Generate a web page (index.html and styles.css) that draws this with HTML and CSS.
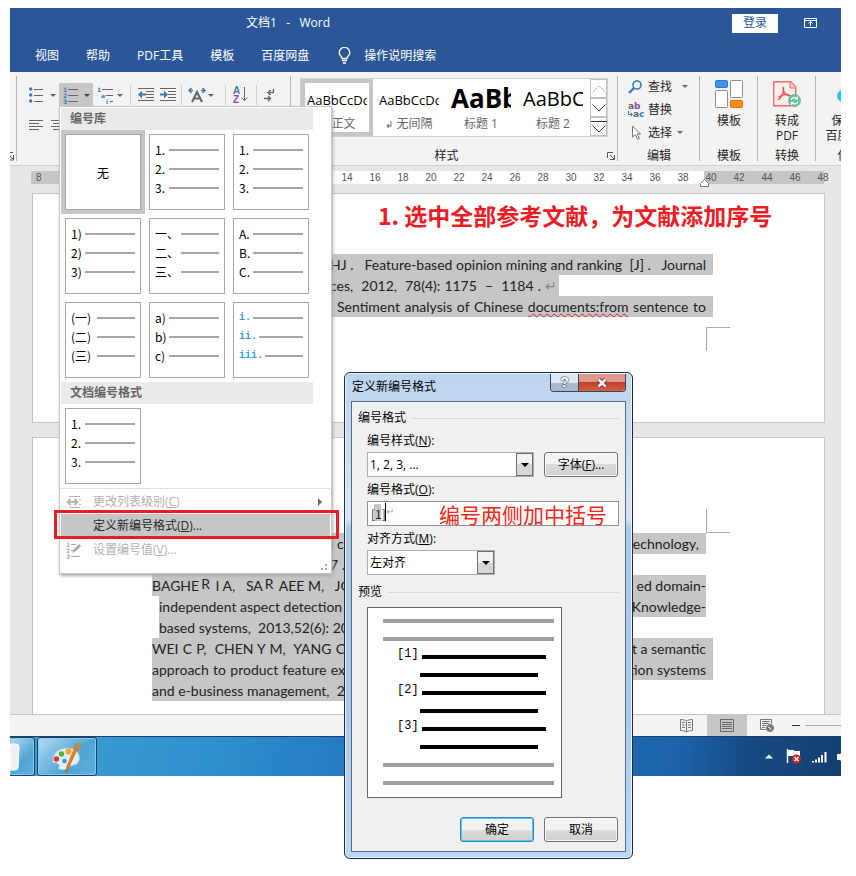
FILE: index.html
```html
<!DOCTYPE html>
<html lang="zh-CN">
<head>
<meta charset="utf-8">
<title>文档1 - Word</title>
<link rel="stylesheet" href="styles.css">
</head>
<body>
<main class="window">
  <header class="titlebar">
    <div class="title-row">
      <h1 class="doc-title">文档1 &nbsp;&nbsp;-&nbsp;&nbsp; Word</h1>
      <button class="login">登录</button>
      <button class="ribbon-toggle" aria-label="功能区显示选项">
        <svg width="13" height="10" viewBox="0 0 13 10" fill="none" stroke="#fff"><path d="M.5.5h12v9H.5zM.5 2.5h12M6.5 8V4M4.500 5.500l2-2 2 2"/></svg>
      </button>
    </div>
    <nav class="tabs">
      <a href="#view">视图</a><a href="#help">帮助</a><a href="#pdf">PDF工具</a><a href="#tpl">模板</a><a href="#pan">百度网盘</a>
      <a href="#tell" class="tell"><svg width="13" height="18" viewBox="0 0 13 18" fill="none" stroke="#fff" stroke-width="1.300"><path d="M4 11.500C4 9 1.200 8.500 1.200 5.700a5.300 5.300 0 0 1 10.600 0C11.800 8.500 9 9 9 11.500zM4 13.500h5M5 16h3"/></svg>操作说明搜索</a>
    </nav>
  </header>

  <section class="ribbon">
    <div class="group group-edge"><svg width="4" height="9" viewBox="0 0 4 9" fill="none" stroke="#555"><path d="M0 .5h3M0 4l3 3M3.500 3v5H0"/></svg></div>
    <div class="group group-para">
      <div class="tools">
        <button class="tool" aria-label="项目符号"><svg width="28" height="18" viewBox="0 0 28 18"><g fill="#3f7ab5"><circle cx="1.700" cy="3" r="1.700"/><circle cx="1.700" cy="9" r="1.700"/><circle cx="1.700" cy="15" r="1.700"/></g><path d="M5 3.500h9M5 9.500h9M5 15.500h9" stroke="#666"/><path d="M21 8h6l-3 3z" fill="#666"/></svg></button>
        <button class="tool on" aria-label="编号"><svg width="28" height="18" viewBox="0 0 28 18"><g class="digit" fill="#3f7ab5"><text x="0" y="6">1</text><text x="0" y="12">2</text><text x="0" y="18">3</text></g><path d="M5 3.500h10M5 9.500h10M5 15.500h10" stroke="#666"/><path d="M21 8h6l-3 3z" fill="#444"/></svg></button>
        <button class="tool" aria-label="多级列表"><svg width="28" height="18" viewBox="0 0 28 18"><g class="digit" fill="#3f7ab5"><text x="0" y="6">1</text><text x="4" y="12">a</text><text x="9" y="18">i</text></g><path d="M5 3.500h11M9 9.500h7M13 15.500h3" stroke="#666"/><path d="M20 8h6l-3 3z" fill="#666"/></svg></button>
        <span class="sep"></span>
        <button class="tool slim" aria-label="减少缩进量"><svg width="17" height="14" viewBox="0 0 17 14"><path d="M0 .5h16M8 3.500h8M8 6.500h8M8 9.500h8M0 12.500h16" stroke="#666"/><path d="M0 6.500l4-4v3h4v2H4v3z" fill="#3f7ab5"/></svg></button>
        <button class="tool slim" aria-label="增加缩进量"><svg width="17" height="14" viewBox="0 0 17 14"><path d="M0 .5h16M8 3.500h8M8 6.500h8M8 9.500h8M0 12.500h16" stroke="#666"/><path d="M8 6.500l-4-4v3H0v2h4v3z" fill="#3f7ab5"/></svg></button>
        <span class="sep"></span>
        <button class="tool wide" aria-label="中文版式"><svg width="26" height="16" viewBox="0 0 26 16" fill="none"><path d="M4 15l5-10 5 10M6 11.500h6" stroke="#666" stroke-width="2"/><path d="M3.500 1L1 3.500 3.500 6M1 3.500h4M14.500 1L17 3.500 14.500 6M17 3.500h-4" stroke="#3f7ab5" stroke-width="1.500"/><path d="M20 7h6l-3 3z" fill="#666"/></svg></button>
        <span class="sep"></span>
        <button class="tool sort" aria-label="排序"><svg width="15" height="18" viewBox="0 0 15 18"><g class="letters"><text x="0" y="8" fill="#3f7ab5">A</text><text x="0" y="17" fill="#8a4aa8">Z</text></g><path d="M11.500 1v13M8.500 11.500l3 3 3-3" fill="none" stroke="#666"/></svg></button>
        <span class="sep"></span>
        <button class="tool sort" aria-label="显示编辑标记"><svg width="12" height="14" viewBox="0 0 12 14" fill="none" stroke="#666" stroke-width="1.300"><path d="M9.500 1v3.500H4M6.500 2L4 4.500 6.500 7M0 10.500h6M4 8l2.500 2.500L4 13"/></svg></button>
      </div>
      <div class="tools second">
        <button class="tool slim" aria-label="左对齐"><svg width="14" height="12" viewBox="0 0 14 12"><path d="M0 .5h14M0 3.500h10M0 6.500h14M0 9.500h10" stroke="#666"/></svg></button>
        <button class="tool slim" aria-label="居中"><svg width="14" height="12" viewBox="0 0 14 12"><path d="M0 .5h14M2 3.500h10M0 6.500h14M2 9.500h10" stroke="#666"/></svg></button>
      </div>
    </div>
    <div class="group group-styles">
      <div class="gallery">
        <button class="style on"><span class="sample">AaBbCcDdEe</span><span class="name">↲ 正文</span></button>
        <button class="style"><span class="sample">AaBbCcDdEe</span><span class="name"><small>↲</small> 无间隔</span></button>
        <button class="style"><span class="sample h1">AaBbC</span><span class="name">标题 1</span></button>
        <button class="style"><span class="sample h2">AaBbCc</span><span class="name">标题 2</span></button>
        <div class="scroll">
          <button aria-label="上一行"><svg width="14" height="8" viewBox="0 0 14 8" fill="none" stroke="#bbb"><path d="M.5 7.500L7 1l6.500 6.500"/></svg></button>
          <button aria-label="下一行"><svg width="14" height="8" viewBox="0 0 14 8" fill="none" stroke="#333"><path d="M.5.5L7 7 13.500.5"/></svg></button>
          <button aria-label="其他"><svg width="16" height="14" viewBox="0 0 16 14" fill="none" stroke="#333"><path d="M0 1.500h16M1.500 5.500L8 12l6.500-6.500"/></svg></button>
        </div>
      </div>
      <div class="caption">样式</div>
      <svg class="launcher" width="8" height="8" viewBox="0 0 8 8" fill="none" stroke="#555"><path d="M.5 6V.5H6M3 3l4 4M7.500 3v4.500H3"/></svg>
    </div>
    <div class="group group-edit">
      <button class="cmd"><svg width="16" height="14" viewBox="0 0 16 14" fill="none" stroke="#3f7ab5"><circle cx="9" cy="5" r="4" stroke-width="1.600"/><path d="M6 8l-5 5" stroke-width="2.400"/></svg>查找<i class="caret far"></i></button>
      <button class="cmd"><svg width="16" height="16" viewBox="0 0 16 16"><g class="abc"><text x="0" y="7" fill="#666">a<tspan fill="#8a4aa8">b</tspan></text><text x="5" y="15" fill="#666">a<tspan fill="#3f7ab5">c</tspan></text></g><path d="M.5 9v3.500H4M2.500 10.500l2 2-2 2" fill="none" stroke="#3f7ab5"/></svg>替换</button>
      <button class="cmd"><svg width="16" height="16" viewBox="0 0 16 16" fill="#fff" stroke="#777"><path d="M4.500 1v11l2.800-2.500L9.500 14.500l2-1-2.300-4.500h3.300z"/></svg>选择<i class="caret"></i></button>
      <div class="caption">编辑</div>
    </div>
    <div class="group group-tpl">
      <button class="big"><svg width="28" height="28" viewBox="0 0 28 28"><rect x=".5" y=".5" width="12" height="7" rx="1" fill="#4394e5" stroke="#2a78c8"/><rect x="15.500" y=".5" width="12" height="17" rx="1" fill="#fff" stroke="#8d8d8d"/><rect x=".5" y="10.500" width="12" height="17" rx="1" fill="#fff" stroke="#8d8d8d"/><rect x="15.500" y="20.500" width="12" height="7" rx="1" fill="#ff8d1c" stroke="#e07808"/></svg><span>模板</span></button>
      <div class="caption">模板</div>
    </div>
    <div class="group group-pdf">
      <button class="big"><svg width="28" height="28" viewBox="0 0 28 28"><path d="M.7 1.700h17l5 5v19h-22z" fill="#fdeeee" stroke="#f06a6a" stroke-width="1.400"/><path d="M17 2v6h6" fill="#fbd0d0" stroke="#f06a6a"/><path d="M10 7c2 4-1 10-5 13M10 8c0 4 3 8 8 8M5.500 17c3-2 7-3 11-2" fill="none" stroke="#ef4f55" stroke-width="1.400"/><circle cx="21.500" cy="20.500" r="6.500" fill="#65c29a"/><path d="M18 20c1-3 5-3 6.500-1m0-2.500V19H22M25 21.500c-1 3-5 3-6.500 1m0 2.500v-2.500H21" fill="none" stroke="#fff" stroke-width="1.200"/></svg><span>转成<br>PDF</span></button>
      <div class="caption">转换</div>
    </div>
    <div class="group group-save">
      <button class="big"><svg width="28" height="28" viewBox="0 0 28 28"><circle cx="7" cy="16" r="6" fill="#25c4f3"/><circle cx="21" cy="16" r="6" fill="#2a7df0"/></svg><span>保存到<br>百度网盘</span></button>
      <div class="caption">保存</div>
    </div>
  </section>

  <section class="workspace">
    <div class="ruler">
      <span class="first">8</span><span>14</span><span>16</span><span>18</span><span>20</span><span>22</span><span>24</span><span>26</span><span>28</span><span>30</span><span>32</span><span>34</span><span>36</span><span>38</span><span>40</span><span>42</span><span>44</span><span>46</span><span>48</span>
      <svg class="indent" width="9" height="8" viewBox="0 0 9 8" fill="#fff" stroke="#777"><path d="M.5 7.500v-3l4-4 4 4v3z"/></svg>
    </div>
    <article class="page page-one">
      <p class="note">1. 选中全部参考文献，为文献添加序号</p>
      <div class="refs">
        <p class="line"><span class="tail">HJ .&nbsp;&nbsp; Feature-based opinion mining and ranking&nbsp; [J] .&nbsp;&nbsp; Journal</span></p>
        <p class="line part-a"><span class="tail">ces,&nbsp; 2012,&nbsp; 78(4): 1175&nbsp; –&nbsp; 1184 . <em>↵</em></span></p>
        <p class="line"><span class="tail later">Sentiment analysis of Chinese <u class="typo">documents:from</u> sentence to</span></p>
      </div>
      <i class="corner bottom"></i>
    </article>
    <article class="page page-two">
      <i class="corner top"></i>
      <div class="refs">
        <p class="line short"><span class="mid">l c</span><span>echnology,&nbsp;&nbsp;</span></p>
        <p class="line part-b"><span class="mid">7 .</span></p>
        <p class="line short"><span class="head">BAGHE<sup>R</sup> I A,&nbsp;&nbsp; SA<sup>R</sup> AEE M,&nbsp;&nbsp; JON</span><span>ed domain-</span></p>
        <p class="line short inset"><span class="head">independent aspect detection f</span><span>Knowledge-</span></p>
        <p class="line part-b inset"><span class="head">based systems,&nbsp; 2013,52(6): 20</span></p>
        <p class="line"><span class="head">WEI C P,&nbsp; CHEN Y M,&nbsp; YANG C</span><span>t a semantic</span></p>
        <p class="line"><span class="head">approach to product feature ex</span><span>tion systems</span></p>
        <p class="line part-b"><span class="head">and e-business management,&nbsp; 2</span></p>
      </div>
    </article>
  </section>

  <footer class="status">
    <button aria-label="阅读视图"><svg width="14" height="14" viewBox="0 0 14 14" fill="none" stroke="#777"><path d="M6.500 2C5 1 3 .5.500.5v11c2.500 0 4.500.5 6 1.500 1.500-1 3.500-1.500 6-1.500V.5c-2.500 0-4.500.5-6 1.500zM6.500 2v11M2 3.500h3M2 6h3M2 8.500h3M8 3.500h3M8 6h3M8 8.500h3"/></svg></button>
    <button class="on" aria-label="页面视图"><svg width="14" height="13" viewBox="0 0 14 13" fill="none" stroke="#666"><path d="M.5.5h13v12H.5zM2 3.500h10M2 5.500h10M2 7.500h10M2 9.500h10"/></svg></button>
    <button aria-label="Web 版式"><svg width="15" height="14" viewBox="0 0 15 14" fill="none" stroke="#777"><path d="M6 10.500H.5V.5h11V5M2 2.500h8M2 4.500h7M2 6.500h4M2 8.500h3"/><circle cx="10" cy="9" r="3.500" fill="#777"/><path d="M8 8l2 1 1 2" stroke="#f3f3f3"/></svg></button>
    <span class="minus"></span><span class="track"></span>
  </footer>
  <div class="taskbar">
    <button class="app cut" aria-label="文档"><svg width="12" height="28" viewBox="0 0 12 28"><path d="M0 1h6q3 0 3 3L8 25q0 2-3 2H0z" fill="#eef1f4" stroke="#fff"/></svg></button>
    <button class="app paint" aria-label="画图"><svg width="32" height="32" viewBox="0 0 32 32"><path d="M2 22C0 12 9 6 18 7c8 1 12 7 10 13-2 5-8 4-10 6-2 3-8 4-11 1 3-2 0-6-5-5z" fill="#dceefa" stroke="#9cc3de"/><circle cx="5.500" cy="18" r="2.700" fill="#d9372c"/><circle cx="10.500" cy="13" r="2.700" fill="#4db32f"/><circle cx="17.500" cy="10.500" r="3" fill="#f3a81c"/><circle cx="13.500" cy="20" r="2.300" fill="#3e97cb"/><path d="M27 7L18 26l-3 6 1-7L24 6z" fill="#ee7c20" stroke="#c85f10" stroke-width=".6"/><path d="M23 2l8 1-3 6-5-2z" fill="#b48a5c"/></svg></button>
    <div class="tray">
      <svg class="up" width="8" height="5" viewBox="0 0 8 5"><path d="M0 4.500L4 .5l4 4z" fill="#fff"/></svg>
      <svg width="16" height="15" viewBox="0 0 16 15"><path d="M1.500 0v14" stroke="#fff" stroke-width="1.500"/><path d="M2 1h6v1h6v6H8V7H2z" fill="#fff"/><circle cx="10.500" cy="10" r="4.500" fill="#d8241c"/><path d="M8.500 8l4 4M12.500 8l-4 4" stroke="#fff" stroke-width="1.500"/></svg>
      <svg width="15" height="12" viewBox="0 0 15 12"><path d="M1 10v1.500M4 8.500v3M7 6.500v5M10 4v7.500M13.500 1v10.500" stroke="#fff" stroke-width="2"/></svg>
      <svg width="14" height="16" viewBox="0 0 14 16"><path d="M0 5h3l5-5v16l-5-5H0z" fill="#fff"/></svg>
    </div>
  </div>
</main>

<aside class="menu">
  <h2>编号库</h2>
  <div class="tiles">
    <button class="tile none on">无</button>
    <button class="tile"><span>1.<i></i></span><span>2.<i></i></span><span>3.<i></i></span></button>
    <button class="tile"><span>1.<i></i></span><span>2.<i></i></span><span>3.<i></i></span></button>
    <button class="tile"><span>1)<i></i></span><span>2)<i></i></span><span>3)<i></i></span></button>
    <button class="tile cjk"><span>一、<i></i></span><span>二、<i></i></span><span>三、<i></i></span></button>
    <button class="tile"><span>A.<i></i></span><span>B.<i></i></span><span>C.<i></i></span></button>
    <button class="tile cjk"><span>(一)<i></i></span><span>(二)<i></i></span><span>(三)<i></i></span></button>
    <button class="tile"><span>a)<i></i></span><span>b)<i></i></span><span>c)<i></i></span></button>
    <button class="tile roman"><span>i.<i></i></span><span>ii.<i></i></span><span>iii.<i></i></span></button>
  </div>
  <h2>文档编号格式</h2>
  <div class="tiles">
    <button class="tile"><span>1.<i></i></span><span>2.<i></i></span><span>3.<i></i></span></button>
  </div>
  <div class="items">
    <button class="item" disabled><svg width="16" height="12" viewBox="0 0 16 12" fill="none" stroke="#b5b5b5"><path d="M3 .5h11M13 3.500h2M13 8.500h2M3 11.500h11"/><path d="M1 6h11M4.500 3L1.500 6l3 3M8.500 3l3 3-3 3" stroke-width="1.800"/></svg>更改列表级别(<u>C</u>)<b class="more"></b></button>
    <button class="item on">定义新编号格式(<u>D</u>)...</button>
    <button class="item" disabled><svg width="16" height="17" viewBox="0 0 16 17"><g class="digit" fill="#aaa"><text x="0" y="5">1</text><text x="0" y="11">2</text><text x="0" y="17">3</text></g><path d="M5 2.500h5M5 8.500h3M5 14.500h9" stroke="#aaa"/><path d="M6 11l2-4 5-5 2 2-5 5z" fill="#aaa"/></svg>设置编号值(<u>V</u>)...</button>
  </div>
  <svg class="grip" width="7" height="6" viewBox="0 0 7 6" fill="#aaa"><path d="M4 0h2v2H4zM0 4h2v2H0zM4 4h2v2H4z"/></svg>
  <div class="focus-box"></div>
</aside>

<form class="dialog">
  <header class="dialog-title">
    <span>定义新编号格式</span>
    <div class="win-buttons">
      <button type="button" class="help" aria-label="帮助">?</button>
      <button type="button" class="close" aria-label="关闭"><svg width="12" height="10" viewBox="0 0 12 10"><path d="M2.500 1.500l7 7M9.500 1.500l-7 7" stroke="#6b2a2a" stroke-width="4.400"/><path d="M2.500 1.500l7 7M9.500 1.500l-7 7" stroke="#fff" stroke-width="2.600"/></svg></button>
    </div>
  </header>
  <div class="panel">
    <h3>编号格式</h3>
    <div class="fields">
      <label for="num-style">编号样式(<u>N</u>):</label>
      <div class="row">
        <span class="combo grow"><select id="num-style"><option>1, 2, 3, ...</option></select><i></i></span>
        <button type="button" class="btn">字体(<u>F</u>)...</button>
      </div>
      <label for="num-format">编号格式(<u>O</u>):</label>
      <div class="format"><input id="num-format" type="text" value="[1]"><i class="cursor"></i><span class="ret">↵</span><span class="hint">编号两侧加中括号</span></div>
      <label for="align">对齐方式(<u>M</u>):</label>
      <span class="combo narrow"><select id="align"><option>左对齐</option></select><i></i></span>
    </div>
    <h3>预览</h3>
    <div class="preview">
      <i class="gray"></i><i class="gray"></i>
      <p><span>[1]</span><i></i></p><i class="sub"></i>
      <p><span>[2]</span><i></i></p><i class="sub"></i>
      <p><span>[3]</span><i></i></p><i class="sub"></i>
      <i class="gray"></i><i class="gray"></i>
    </div>
    <div class="actions">
      <button type="button" class="btn primary">确定</button>
      <button type="button" class="btn">取消</button>
    </div>
  </div>
</form>
</body>
</html>
```
FILE: styles.css
```css
* { box-sizing: border-box; }

body {
  position: relative;
  margin: 0;
  padding: 8px 15px 100px 10px;
  background: #fff;
  color: #262626;
  font: 12px/18px "Open Sans", "Noto Sans CJK SC", sans-serif;
}

button {
  margin: 0;
  padding: 0;
  border: 0;
  background: none;
  color: inherit;
  font: inherit;
}

h1, h2, h3, p { margin: 0; font: inherit; }
svg { display: block; flex: none; }
.digit { font: bold 6px "DejaVu Sans", sans-serif; }
.letters { font: bold 10px "Liberation Sans", sans-serif; }
.abc { font: bold 9px "DejaVu Sans", sans-serif; }

.window { overflow: hidden; }

/* Title bar and tabs */
.titlebar { height: 64px; background: #2b579a; color: #fff; }
.title-row { display: flex; align-items: center; height: 30px; padding-right: 24px; }
.doc-title { flex: 1; padding-left: 236px; }
.login { width: 46px; height: 19px; margin-right: 26px; background: #fff; color: #2b579a; }
.tabs { display: flex; align-items: center; gap: 27px; height: 34px; padding: 2px 0 0 25px; }
.tabs a { color: inherit; text-decoration: none; white-space: nowrap; }
.tabs .tell { display: flex; align-items: center; gap: 13px; margin-left: 2px; }

/* Ribbon */
.ribbon { display: flex; height: 94px; overflow: hidden; background: #f3f3f3; border-bottom: 1px solid #cfcfcf; }
.group { position: relative; flex: none; padding-top: 6px; }
.group::after { content: ""; position: absolute; top: 4px; right: 0; width: 1px; height: 85px; background: #b5b5b5; }
.caption { position: absolute; bottom: 0; left: 0; width: 100%; text-align: center; line-height: 18px; }
.group-edge { width: 7px; padding-top: 80px; }
.group-para { width: 274px; padding: 10px 0 0 8px; }
.group-styles { flex: 1 1 0; padding-left: 9px; }
.group-styles .caption { padding-right: 16px; }
.group-edit { width: 82px; padding-left: 10px; }
.group-tpl, .group-pdf { width: 58px; }
.group-save { width: 67px; margin-right: -42px; }
.tools { display: flex; align-items: center; height: 25px; }
.tools.second { height: 38px; }
.tool { display: flex; align-items: center; width: 34px; height: 24px; padding-left: 4px; }
.tool.on { background: #c6c6c6; }
.tool.slim { width: 22px; }
.tool.wide { width: 37px; padding-left: 3px; }
.tool.sort { width: 24px; padding-left: 4px; }
.sep { width: 1px; height: 20px; margin: 0 3px; background: #d0d0d0; }
.gallery { display: flex; height: 59px; margin-right: 10px; background: #fff; border: 1px solid #d0d0d0; }
.style { flex: 0 0 72px; height: 57px; border: 4px solid transparent; overflow: hidden; }
.style.on { border-color: #c6c6c6; }
.sample { display: block; height: 32px; margin: 0 2px; overflow: hidden; color: #000; font: 13px/35px "Open Sans", sans-serif; text-align: left; white-space: nowrap; }
.sample.h1 { font-size: 26px; line-height: 30px; font-weight: bold; }
.sample.h2 { font-size: 20px; line-height: 32px; }
.name { display: block; color: #666; line-height: 18px; white-space: nowrap; }
.name small { font-size: 10px; }
.scroll { display: flex; flex-direction: column; width: 17px; margin-left: auto; }
.scroll button { display: flex; flex: 1; align-items: center; justify-content: center; border: 1px solid #c0c0c0; }
.launcher { position: absolute; right: 3px; bottom: 5px; }
.cmd { display: flex; align-items: center; gap: 4px; height: 17px; margin: 0 0 6px; white-space: nowrap; }
.caret { margin-left: 1px; border: 3px solid transparent; border-top-color: #666; border-bottom: 0; }
.caret.far { margin-left: 6px; }
.big { display: flex; flex-direction: column; align-items: center; width: 100%; gap: 5px; padding-top: 2px; line-height: 15px; white-space: nowrap; }

/* Workspace */
.workspace { background: #e6e6e6; padding: 5px 16px 0 21px; }
.ruler {
  position: relative;
  display: flex;
  height: 13px;
  margin-bottom: 9px;
  background: linear-gradient(90deg, #c6c6c6 114px, #fff 114px, #fff 673px, #c6c6c6 673px) no-repeat 0 0 / 793px 100%;
  color: #555;
  font: 10px/13px "Liberation Sans", sans-serif;
}
.ruler span { flex: none; width: 28px; text-align: center; }
.ruler .first { width: 302px; padding-left: 5px; text-align: left; }
.indent { position: absolute; left: 669px; top: 8px; }
.page { margin-left: 1px; background: #fff; border: 1px solid #c6c6c6; color: #222; font: 14px/21px Lato, "Noto Sans CJK SC", sans-serif; }
.page-one { height: 230px; margin-bottom: 14px; padding-top: 6px; }
.page-two { height: 277px; padding-top: 71px; border-bottom: 0; }
.note { margin-bottom: 24px; padding-left: 345px; color: #ed1c24; font: bold 23px/30px "Noto Sans CJK SC", sans-serif; white-space: nowrap; }
.refs { padding-left: 119px; }
.line { display: flex; justify-content: space-between; width: 561px; height: 21px; padding-right: 7px; background: #c6c6c6; white-space: nowrap; }
.line.short { width: 554px; padding-right: 0; }
.line.part-a { width: 407px; padding-right: 2px; }
.line.part-b { width: 300px; }
.line.inset { width: 547px; margin-left: 7px; }
.line.part-b.inset { width: 293px; }
.tail { flex: 1; margin-left: 178px; text-align-last: justify; }
.tail.later { margin-left: 185px; }
.tail em { color: #888; font-style: normal; }
.head { width: 193px; text-align-last: justify; }
.inset .head { width: 186px; }
.mid { padding-left: 178px; }
.line sup { font-size: 14px; line-height: 0; vertical-align: 2px; padding: 0 2px; }
.typo { text-decoration: underline wavy #d02020 1px; }
.corner { display: block; width: 24px; height: 24px; margin-left: 673px; border-left: 1px solid #aaa; }
.corner.bottom { margin-top: 10px; border-top: 1px solid #aaa; }
.corner.top { border-bottom: 1px solid #aaa; }

/* Status bar and taskbar */
.status { display: flex; justify-content: flex-end; align-items: center; height: 22px; background: #f3f3f3; border-top: 1px solid #c6c6c6; }
.status button { display: grid; place-items: center; width: 40px; height: 21px; }
.status button.on { background: #c6c6c6; }
.minus { width: 8px; height: 1px; margin: 0 5px; background: #333; }
.track { width: 36px; height: 1px; background: #aaa; }
.taskbar { display: flex; height: 40px; border-top: 1px solid #16416d; background: linear-gradient(100deg, #3f9fd5 0, #2e8fcd 25%, #2478c1 42%, #1c63ab 80%, #174b84 88%, #143f72); }
.app { display: flex; align-items: center; height: 39px; border: 1px solid #14466c; border-radius: 3px; background: linear-gradient(135deg, #b5dcf1, #4fa5d6 60%, #5fb0dc); box-shadow: inset 0 0 0 1px #8dc8e8; }
.app.cut { width: 25px; margin-right: 2px; border-left: 0; border-radius: 0 3px 3px 0; }
.app.paint { width: 60px; justify-content: center; }
.tray { display: flex; align-items: center; gap: 10px; width: 76px; margin-left: auto; }
.tray .up { margin-right: 3px; }

/* Numbering menu */
.menu { position: absolute; left: 59px; top: 106px; width: 273px; height: 468px; padding: 1px; background: #fff; border: 1px solid #c6c6c6; box-shadow: 1px 2px 3px #aaa; }
.menu h2 { width: 252px; height: 22px; padding-left: 9px; background: #eaeaea; color: #666; font-weight: bold; line-height: 22px; }
.tiles { display: grid; grid-template-columns: repeat(3, 76px); gap: 8px; padding: 4px; }
.tile { display: flex; flex-direction: column; height: 76px; padding: 5px; border: 1px solid #a6a6a6; background: #fff; color: #000; font: 12px/19px "Noto Sans CJK SC", sans-serif; }
.tile.on { align-items: center; justify-content: center; outline: 4px solid #c6c6c6; }
.tile span { display: flex; align-items: center; width: 100%; height: 19px; white-space: nowrap; }
.tile i { flex: none; width: 50px; height: 2px; margin-left: auto; background: #a6a6a6; }
.tile.cjk i { width: 38px; }
.tile.roman span { color: #3b96e0; font: bold 10px "Liberation Mono", monospace; }
.tile.roman i { flex: 1; margin-left: 2px; }
.items { border-top: 1px solid #e1e1e1; padding-top: 1px; }
.item { display: flex; align-items: center; width: 100%; height: 24px; padding-left: 32px; }
.item svg { width: 16px; margin: 0 11px 0 -27px; }
.item:disabled { color: #b1b1b1; }
.item.on { background: #c6c6c6; }
.more { margin: 0 8px 0 auto; border: 4px solid transparent; border-left-color: #666; border-right: 0; }
.grip { position: absolute; right: 3px; bottom: 3px; }
.focus-box { position: absolute; left: -6px; top: 403px; width: 285px; height: 29px; border: 3px solid #ed1c24; }

/* Dialog */
.dialog { position: absolute; left: 344px; top: 372px; width: 289px; height: 487px; padding: 1px 6px 6px; border: 1px solid #1f2a3a; border-radius: 6px; background: linear-gradient(#bcd5ee, #d5e5f6 30%, #a9c9ea 32%, #a8caec 70%, #b9d9fb); box-shadow: inset 0 0 0 1px #e8f3fd; color: #000; }
.dialog-title { display: flex; justify-content: space-between; height: 27px; padding-left: 1px; line-height: 25px; }
.win-buttons { display: flex; height: 18px; border: 1px solid #3b4658; border-top: 0; border-radius: 0 0 4px 4px; overflow: hidden; }
.help { width: 27px; background: linear-gradient(#dce8f4 50%, #a7bacf 50%); color: #fff; font: bold 14px/17px "Liberation Sans", sans-serif; text-shadow: 0 0 2px #223, 0 0 1px #223; }
.close { display: grid; place-items: center; width: 47px; border-left: 1px solid #3b4658; background: linear-gradient(#dd9a8c 45%, #c43e26 50%, #d0604a); }
.panel { height: 451px; padding: 6px; border: 1px solid #5c6b80; background: #f0f0f0; }
.panel h3 { display: flex; align-items: center; gap: 5px; height: 20px; }
.panel h3::after { content: ""; flex: 1; height: 1px; background: #d0dce4; }
.fields { display: flex; flex-direction: column; padding: 4px 0 7px 9px; }
.fields label { height: 18px; line-height: 18px; }
.row, .format, .combo.narrow { margin: 2px 0 4px; }
.row { display: flex; gap: 10px; padding-right: 1px; }
.combo { position: relative; height: 25px; }
.combo.grow { flex: 1; }
.combo.narrow { width: 128px; margin-bottom: 0; }
.combo select { width: 100%; height: 25px; padding: 0 2px; border: 1px solid #abadb3; background: #fff; color: #000; font: inherit; appearance: none; }
.combo i { position: absolute; top: 1px; right: 1px; width: 17px; height: 23px; border: 1px solid #707070; background: linear-gradient(#f2f2f2 50%, #d6d6d6 50%); pointer-events: none; }
.combo i::after { content: ""; position: absolute; left: 4px; top: 9px; border: 4px solid transparent; border-top-color: #000; border-bottom: 0; }
.btn { width: 74px; height: 25px; border: 1px solid #707070; border-radius: 3px; background: linear-gradient(#f2f2f2 50%, #dcdcdc 50%, #cfcfcf); box-shadow: inset 0 0 0 1px #fafafa; }
.btn.primary { border-color: #3c7fb1; box-shadow: inset 0 0 0 1px #48d0f5; }
.format { position: relative; height: 25px; }
.format input { width: 100%; height: 25px; padding: 0 3px; border: 1px solid #8c8f96; background: linear-gradient(#c6c6c6, #c6c6c6) no-repeat 6px 2px / 7px 17px #fff; color: #222; font: 12px "Noto Sans CJK SC", sans-serif; }
.cursor { position: absolute; left: 18px; top: 2px; width: 1px; height: 18px; background: #000; }
.ret { position: absolute; left: 19px; top: 1px; color: #aaa; font-size: 10px; }
.hint { position: absolute; left: 72px; top: 0; color: #fb2416; font-size: 21px; line-height: 29px; white-space: nowrap; }
.preview { display: flex; flex-direction: column; gap: 14px; width: 195px; height: 191px; margin: 5px 0 19px 9px; padding: 11px 7px 0 15px; border: 1px solid #666; background: #fff; }
.preview > i { flex: none; height: 4px; background: #a0a0a0; }
.preview > i.sub { width: 118px; margin-left: 37px; background: #000; }
.preview p { display: flex; align-items: center; height: 4px; }
.preview span { width: 39px; padding: 0 0 6px 14px; font: 12px/18px "Liberation Mono", monospace; }
.preview p i { width: 124px; height: 4px; background: #000; }
.actions { display: flex; justify-content: flex-end; gap: 10px; padding-right: 1px; }
```
